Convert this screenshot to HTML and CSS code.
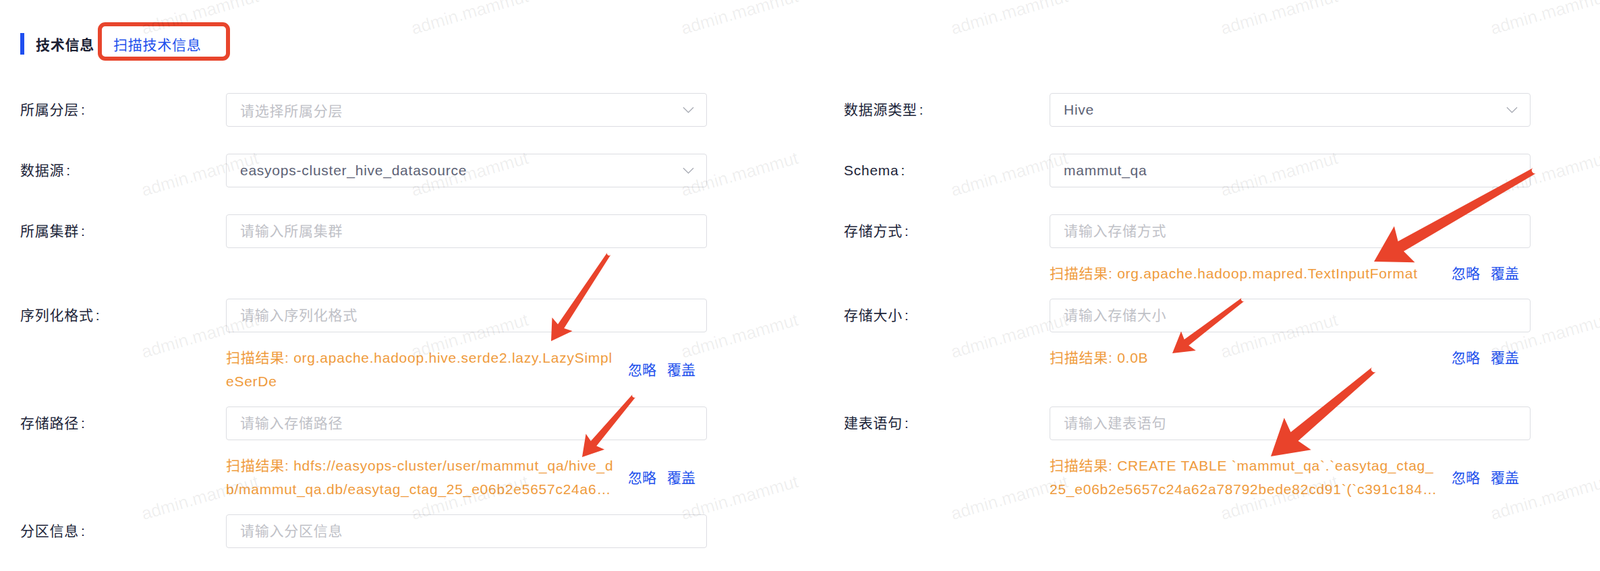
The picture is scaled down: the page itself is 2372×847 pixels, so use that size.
FILE: index.html
```html
<!DOCTYPE html>
<html lang="zh-CN">
<head>
    <meta charset="UTF-8">
    <meta name="viewport" content="width=device-width, initial-scale=1.0">
    <title>技术信息</title>
    <link rel="stylesheet" href="styles.css">
</head>
<body>
    <div class="page">
        <div class="section-title">
            <span class="title-bar"></span>
            <h2 class="title-text">技术信息</h2>
            <span class="mark-box"><a class="scan-link" href="#">扫描技术信息</a></span>
        </div>

        <div class="form">
            <div class="field plain">
                <label class="field-label">所属分层</label>
                <div class="control">
                    <div class="select"><span class="placeholder">请选择所属分层</span><svg class="chevron" viewBox="0 0 18 10"><path d="M1 1 L9 9 L17 1"/></svg></div>
                </div>
            </div>
            <div class="field plain">
                <label class="field-label">数据源类型</label>
                <div class="control">
                    <div class="select"><span class="value">Hive</span><svg class="chevron" viewBox="0 0 18 10"><path d="M1 1 L9 9 L17 1"/></svg></div>
                </div>
            </div>

            <div class="field plain">
                <label class="field-label">数据源</label>
                <div class="control">
                    <div class="select"><span class="value">easyops-cluster_hive_datasource</span><svg class="chevron" viewBox="0 0 18 10"><path d="M1 1 L9 9 L17 1"/></svg></div>
                </div>
            </div>
            <div class="field plain">
                <label class="field-label">Schema</label>
                <div class="control">
                    <input class="input" type="text" value="mammut_qa">
                </div>
            </div>

            <div class="field plain">
                <label class="field-label">所属集群</label>
                <div class="control">
                    <input class="input" type="text" placeholder="请输入所属集群">
                </div>
            </div>
            <div class="field">
                <label class="field-label">存储方式</label>
                <div class="control">
                    <input class="input" type="text" placeholder="请输入存储方式">
                    <div class="scan">
                        <div class="scan-text">扫描结果: org.apache.hadoop.mapred.TextInputFormat</div>
                        <div class="scan-actions"><a href="#">忽略</a><a href="#">覆盖</a></div>
                    </div>
                </div>
            </div>

            <div class="field">
                <label class="field-label">序列化格式</label>
                <div class="control">
                    <input class="input" type="text" placeholder="请输入序列化格式">
                    <div class="scan">
                        <div class="scan-text">扫描结果: org.apache.hadoop.hive.serde2.lazy.LazySimpleSerDe</div>
                        <div class="scan-actions"><a href="#">忽略</a><a href="#">覆盖</a></div>
                    </div>
                </div>
            </div>
            <div class="field">
                <label class="field-label">存储大小</label>
                <div class="control">
                    <input class="input" type="text" placeholder="请输入存储大小">
                    <div class="scan">
                        <div class="scan-text">扫描结果: 0.0B</div>
                        <div class="scan-actions"><a href="#">忽略</a><a href="#">覆盖</a></div>
                    </div>
                </div>
            </div>

            <div class="field">
                <label class="field-label">存储路径</label>
                <div class="control">
                    <input class="input" type="text" placeholder="请输入存储路径">
                    <div class="scan">
                        <div class="scan-text">扫描结果: hdfs://easyops-cluster/user/mammut_qa/hive_db/mammut_qa.db/easytag_ctag_25_e06b2e5657c24a62a78792bede82cd91</div>
                        <div class="scan-actions"><a href="#">忽略</a><a href="#">覆盖</a></div>
                    </div>
                </div>
            </div>
            <div class="field">
                <label class="field-label">建表语句</label>
                <div class="control">
                    <input class="input" type="text" placeholder="请输入建表语句">
                    <div class="scan">
                        <div class="scan-text">扫描结果: CREATE TABLE `mammut_qa`.`easytag_ctag_25_e06b2e5657c24a62a78792bede82cd91`(`c391c18492` string, `c2` string) ROW FORMAT SERDE</div>
                        <div class="scan-actions"><a href="#">忽略</a><a href="#">覆盖</a></div>
                    </div>
                </div>
            </div>

            <div class="field plain">
                <label class="field-label">分区信息</label>
                <div class="control">
                    <input class="input" type="text" placeholder="请输入分区信息">
                </div>
            </div>
        </div>
    </div>

    <div id="watermarks" class="watermarks"></div>
    <svg id="arrows" class="arrows" width="2372" height="847"></svg>

    <script>
        // watermark tiles
        const wm = document.getElementById('watermarks');
        for (let i = 0; i < 24; i++) {
            const cell = document.createElement('div');
            cell.className = 'wm-cell';
            cell.innerHTML = '<span>admin.mammut</span>';
            wm.appendChild(cell);
        }

        // annotation arrows: tail x/y, tip x/y, big or small
        const arrows = [
            [903, 376, 817, 506, false],
            [940, 587, 863, 678, false],
            [2275, 253, 2037, 388, true],
            [1843, 444, 1738, 524, false],
            [2037, 548, 1884, 677, true]
        ];

        function arrowPath(tx, ty, px, py, big) {
            const L = big ? 52 : 30, hw = big ? 31 : 18, sw = big ? 17 : 11, tw = big ? 9 : 6;
            const len = Math.hypot(px - tx, py - ty);
            const dx = (px - tx) / len, dy = (py - ty) / len;
            const nx = -dy, ny = dx;
            const neck = L * 0.88;
            const p = (x, y) => x.toFixed(1) + ' ' + y.toFixed(1);
            return 'M' + p(tx + nx * tw / 2, ty + ny * tw / 2) +
                ' L' + p(px - dx * neck + nx * sw / 2, py - dy * neck + ny * sw / 2) +
                ' L' + p(px - dx * L + nx * hw, py - dy * L + ny * hw) +
                ' L' + p(px, py) +
                ' L' + p(px - dx * L - nx * hw, py - dy * L - ny * hw) +
                ' L' + p(px - dx * neck - nx * sw / 2, py - dy * neck - ny * sw / 2) +
                ' L' + p(tx - nx * tw / 2, ty - ny * tw / 2) +
                ' A' + (tw / 2) + ' ' + (tw / 2) + ' 0 0 1 ' + p(tx + nx * tw / 2, ty + ny * tw / 2) + ' Z';
        }

        const svg = document.getElementById('arrows');
        svg.innerHTML = arrows.map(a => '<path d="' + arrowPath(...a) + '"/>').join('');
    </script>
</body>
</html>
```

FILE: styles.css
```css
html, body {
    margin: 0;
    height: 100%;
}
body {
    position: relative;
    overflow: hidden;
    background-color: #fff;
    font-family: "Liberation Sans", "Noto Sans CJK SC", sans-serif;
    font-size: 21px;
    letter-spacing: 0.75px;
    color: #1c2438;
}
.page {
    padding: 33px 0 0 30px;
}
.section-title {
    display: flex;
    align-items: center;
    height: 64px;
}
.title-bar {
    width: 6px;
    height: 32px;
    background-color: #1f4ff0;
}
.title-text {
    margin: 0 0 0 17px;
    font-size: 21px;
    font-weight: bold;
    color: #1c2134;
}
.mark-box {
    align-self: flex-start;
    display: flex;
    align-items: center;
    box-sizing: border-box;
    height: 57px;
    margin-left: 5px;
    padding: 6px 36px 0 17px;
    border: 6px solid #e8452c;
    border-radius: 11px;
}
.scan-link {
    color: #2150ec;
    text-decoration: none;
}
.form {
    display: grid;
    grid-template-columns: 1221px auto;
    row-gap: 20px;
    margin-top: 41px;
}
.field {
    display: flex;
    align-items: flex-start;
}
.field-label {
    width: 305px;
    flex-shrink: 0;
    line-height: 50px;
    color: #1c2438;
}
.field-label::after {
    content: ":";
    margin-left: 3px;
}
.control {
    width: 713px;
}
.field.plain .control {
    padding-bottom: 20px;
}
.input, .select {
    display: flex;
    align-items: center;
    box-sizing: border-box;
    width: 100%;
    height: 50px;
    margin: 0;
    padding: 0 20px;
    border: 1px solid #dcdde2;
    border-radius: 4px;
    background-color: #fff;
    font-family: inherit;
    font-size: 21px;
    letter-spacing: inherit;
    color: #5c6275;
    outline: none;
}
.input::placeholder, .select .placeholder {
    color: #bfc1c7;
}
.select .value, .select .placeholder {
    flex: 1;
}
.chevron {
    width: 17px;
    height: 10px;
    margin-right: -2px;
    fill: none;
    stroke: #a9acb5;
    stroke-width: 1.4;
}
.scan {
    display: flex;
    align-items: center;
    margin-top: 20px;
}
.scan-text {
    flex: 1;
    min-width: 0;
    line-height: 35px;
    color: #ef9b3c;
    word-break: break-all;
    display: -webkit-box;
    -webkit-line-clamp: 2;
    -webkit-box-orient: vertical;
    overflow: hidden;
}
.scan-actions {
    display: flex;
    gap: 16px;
    margin: 0 17px 0 20px;
    line-height: 35px;
    letter-spacing: 0;
}
.scan-actions a {
    color: #2150ec;
    text-decoration: none;
}
.watermarks {
    position: absolute;
    left: 97px;
    top: -102px;
    display: grid;
    grid-template-columns: repeat(6, 400px);
    grid-auto-rows: 240px;
    pointer-events: none;
}
.wm-cell {
    display: flex;
    justify-content: center;
    align-items: center;
}
.wm-cell span {
    font-size: 26px;
    letter-spacing: 0;
    color: rgba(0, 0, 0, 0.07);
    transform: rotate(-16deg);
    white-space: nowrap;
}
.arrows {
    position: absolute;
    left: 0;
    top: 0;
    pointer-events: none;
    fill: #e9432b;
}
```
